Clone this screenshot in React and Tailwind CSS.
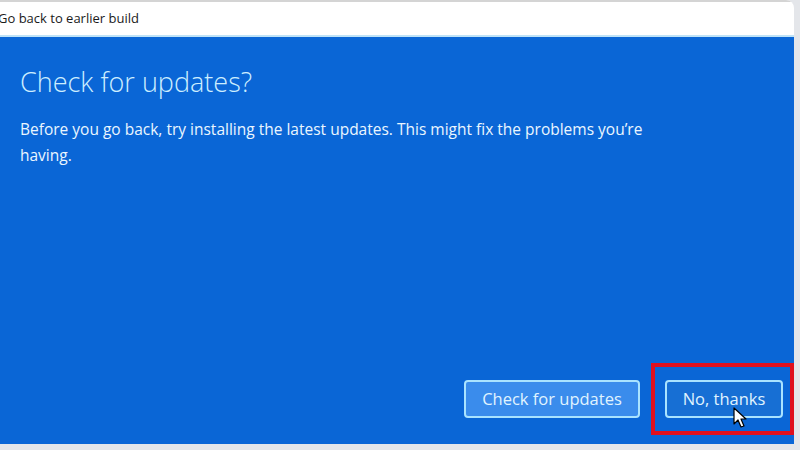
import React from "react";

export default function App() {
  return (
    <div className="w-[800px] h-[450px] bg-[#e4e6ea] overflow-hidden relative" style={{ fontFamily: '"Open Sans", "Noto Sans", sans-serif' }}>
      <div className="w-[794px] h-[444px] flex flex-col rounded-tr-[8px] overflow-hidden">
        <div className="h-[37px] bg-white border-t-[2px] border-[#d4d4d4] border-b-[2px] border-b-[#bfe3f7] flex items-center shrink-0">
          <span className="text-[13px] text-[#1a1a1a] ml-[-2px] leading-none">Go back to earlier build</span>
        </div>
        <div className="flex-1 bg-[#0a66d6] flex flex-col pl-[20px]">
          <h1 className="mt-[28px] text-[27px] font-light leading-[34px] text-[#cdeeff]">Check for updates?</h1>
          <p className="mt-[17px] text-[15.5px] leading-[26px] text-[#eaf6ff] w-[660px]">
            Before you go back, try installing the latest updates. This might fix the problems you’re having.
          </p>
          <div className="mt-auto mb-[9px] flex items-center justify-end gap-[11px]">
            <button className="w-[176px] h-[38px] rounded-[4px] border-2 border-[#a9e3ff] bg-[#3a8cec] text-[16.5px] text-[#e0f4ff]">
              Check for updates
            </button>
            <div className="border-4 border-[#e0101e] pl-[10px] pr-[7px] py-[13px] relative">
              <button className="w-[118px] h-[38px] rounded-[4px] border-2 border-[#a9e3ff] bg-[#176fd4] text-[16.5px] text-[#e0f4ff]">
                No, thanks
              </button>
              <svg className="absolute left-[78px] top-[40px]" width="16" height="22" viewBox="0 0 16 22">
                <path d="M1 1 L1 17 L5 13 L8 20 L11 19 L8 12 L13 12 Z" fill="white" stroke="black" strokeWidth="1.2" strokeLinejoin="round" />
              </svg>
            </div>
          </div>
        </div>
      </div>
    </div>
  );
}
